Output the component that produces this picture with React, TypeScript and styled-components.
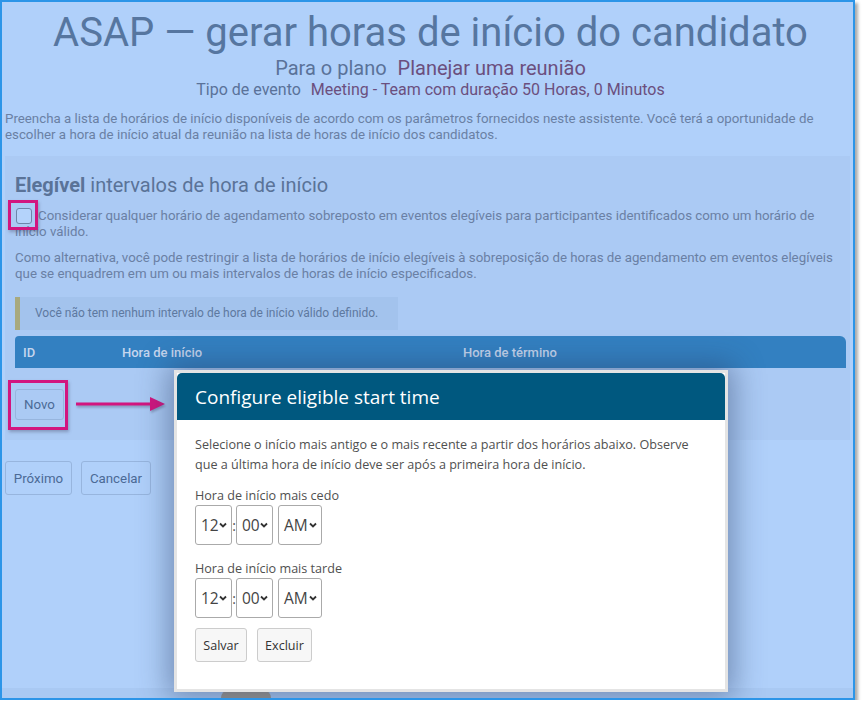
import React from "react";
import styled, { createGlobalStyle } from "styled-components";

const Global = createGlobalStyle`
  html, body { margin: 0; padding: 0; background: #fff; }
  * { box-sizing: border-box; }
`;

const Frame = styled.div`
  position: relative;
  width: 855px;
  height: 700px;
  border: 2px solid #2c95e8;
  background: #b0d0fa;
  box-shadow: 3px 3px 3px rgba(70, 70, 70, 0.45);
  padding: 0 3px;
  overflow: hidden;
  display: flex;
  flex-direction: column;
  font-family: Roboto, "Liberation Sans", sans-serif;
  color: #5a7398;
`;

const Title = styled.h1`
  margin: 0;
  padding: 7px 0 0 6px;
  font-size: 40px;
  font-weight: 400;
  line-height: 48px;
  text-align: center;
  color: #5676a0;
`;

const InfoLine = styled.div<{ $size: number }>`
  padding-left: 6px;
  text-align: center;
  font-size: ${(p) => p.$size}px;
  line-height: ${(p) => p.$size + 3}px;
  color: #5a7299;
  span { color: #6b4f7e; margin-left: 6px; }
`;

const Intro = styled.p`
  margin: 12px 0 0;
  font-size: 13.3px;
  line-height: 16px;
  color: #6a80a4;
`;

const Section = styled.section`
  margin-top: 13px;
  padding: 16px 4px 20px 10px;
  background: #abcaf4;
`;

const SectionTitle = styled.h2`
  margin: 0 0 10px;
  font-size: 20px;
  font-weight: 400;
  line-height: 26px;
  color: #5a7398;
  b { font-weight: 700; }
`;

const Text = styled.p`
  margin: 0;
  font-size: 13.3px;
  line-height: 16px;
  color: #6a80a4;
  & + & { margin-top: 10px; }
`;

const Check = styled.span`
  float: left;
  width: 16px;
  height: 16px;
  margin: 0 6px 0 1px;
  border: 1px solid #6d86ab;
  border-radius: 3px;
  background: #b4d3fb;
`;

const Alert = styled.div`
  width: 383px;
  margin-top: 15px;
  padding: 8px 15px;
  border-left: 5px solid #a8a97e;
  background: #a3c3ed;
  font-size: 12px;
  line-height: 17px;
  color: #5e79a0;
`;

const TableHead = styled.div`
  display: grid;
  grid-template-columns: 99px 341px 1fr;
  height: 32px;
  margin-top: 6px;
  padding-left: 8px;
  align-items: center;
  border-radius: 4px 6px 0 0;
  background: #3380c1;
  font-size: 13px;
  font-weight: 500;
  color: #c6d6ee;
`;

const Button = styled.button<{ $w: number; $h: number }>`
  width: ${(p) => p.$w}px;
  height: ${(p) => p.$h}px;
  padding: 0;
  border: 1px solid #97b5de;
  border-radius: 3px;
  background: transparent;
  font-family: inherit;
  font-size: 13.3px;
  color: #4b6a96;
`;

const NewRow = styled.div`
  margin-top: 21px;
`;

const Footer = styled.div`
  display: flex;
  gap: 9px;
  margin-top: 21px;
`;

const Spacer = styled.div`
  flex: 1;
`;

const BottomBand = styled.div`
  height: 10px;
  margin: 0 -3px;
  background: #a9c9f3;
`;

/* annotation callouts drawn over the page */
const Callout = styled.div<{ $x: number; $y: number; $w: number; $h: number }>`
  position: absolute;
  left: ${(p) => p.$x}px;
  top: ${(p) => p.$y}px;
  width: ${(p) => p.$w}px;
  height: ${(p) => p.$h}px;
  border: 3px solid #d2157f;
  box-shadow: 1px 2px 3px rgba(60, 60, 90, 0.35);
`;

const Arrow = styled.svg`
  position: absolute;
  left: 72px;
  top: 392px;
  filter: drop-shadow(1px 2px 1px rgba(60, 60, 90, 0.35));
`;

const Bump = styled.div`
  position: absolute;
  left: 219px;
  bottom: 0;
  width: 50px;
  height: 8px;
  border-radius: 25px 25px 0 0;
  background: #9d9890;
`;

/* modal dialog */
const Modal = styled.div`
  position: absolute;
  left: 172px;
  top: 368px;
  width: 554px;
  height: 322px;
  border: 3px solid #e4e4e4;
  background: #fff;
  box-shadow: 0 0 28px 6px rgba(40, 60, 100, 0.45);
  font-family: "Open Sans", "Noto Sans", sans-serif;
`;

const ModalHead = styled.div`
  height: 47px;
  padding-left: 18px;
  display: flex;
  align-items: center;
  border-radius: 5px 5px 0 0;
  background: #00587f;
  color: #fff;
  font-size: 19px;
`;

const ModalBody = styled.div`
  padding: 15px 18px 0;
  font-size: 12.6px;
  color: #505050;
`;

const ModalText = styled.p`
  margin: 0;
  line-height: 20px;
`;

const Label = styled.div`
  margin-top: 12px;
  line-height: 18px;
  & ~ & { margin-top: 15px; }
`;

const TimeRow = styled.div`
  display: flex;
  align-items: center;
`;

const Picker = styled.div<{ $w: number }>`
  display: flex;
  align-items: center;
  justify-content: space-between;
  width: ${(p) => p.$w}px;
  height: 40px;
  padding: 0 4px 0 5px;
  border: 1px solid #aaa;
  border-radius: 3px;
  font-size: 15.5px;
  color: #444;
  svg { flex: none; }
`;

const Colon = styled.span`
  width: 4px;
  text-align: center;
  font-size: 14px;
  color: #555;
`;

const Gap = styled.span`
  width: 5px;
`;

const Actions = styled.div`
  display: flex;
  gap: 10px;
  margin-top: 10px;
`;

const ModalButton = styled.button<{ $w: number }>`
  width: ${(p) => p.$w}px;
  height: 34px;
  padding: 0;
  border: 1px solid #ccc;
  border-radius: 3px;
  background: #f7f7f7;
  font-family: inherit;
  font-size: 12.6px;
  color: #333;
`;

function Chevron() {
  return (
    <svg width="8" height="6" viewBox="0 0 8 6">
      <path d="M1 1.5 L4 4.5 L7 1.5" fill="none" stroke="#333" strokeWidth="1.8" />
    </svg>
  );
}

function TimePicker() {
  return (
    <TimeRow>
      <Picker $w={37}>12<Chevron /></Picker>
      <Colon>:</Colon>
      <Picker $w={37}>00<Chevron /></Picker>
      <Gap />
      <Picker $w={44}>AM<Chevron /></Picker>
    </TimeRow>
  );
}

export default function App() {
  return (
    <Frame>
      <Global />
      <Title>ASAP — gerar horas de início do candidato</Title>
      <InfoLine $size={20}>
        Para o plano <span>Planejar uma reunião</span>
      </InfoLine>
      <InfoLine $size={16}>
        Tipo de evento <span>Meeting - Team com duração 50 Horas, 0 Minutos</span>
      </InfoLine>
      <Intro>
        Preencha a lista de horários de início disponíveis de acordo com os parâmetros fornecidos neste assistente. Você terá a oportunidade de escolher a hora de início atual da reunião na lista de horas de início dos candidatos.
      </Intro>

      <Section>
        <SectionTitle>
          <b>Elegível</b> intervalos de hora de início
        </SectionTitle>
        <Text>
          <Check />
          Considerar qualquer horário de agendamento sobreposto em eventos elegíveis para participantes identificados como um horário de início válido.
        </Text>
        <Text>
          Como alternativa, você pode restringir a lista de horários de início elegíveis à sobreposição de horas de agendamento em eventos elegíveis que se enquadrem em um ou mais intervalos de horas de início especificados.
        </Text>
        <Alert>Você não tem nenhum intervalo de hora de início válido definido.</Alert>
        <TableHead>
          <span>ID</span>
          <span>Hora de início</span>
          <span>Hora de término</span>
        </TableHead>
        <NewRow>
          <Button $w={49} $h={31}>Novo</Button>
        </NewRow>
      </Section>

      <Footer>
        <Button $w={67} $h={34}>Próximo</Button>
        <Button $w={70} $h={34}>Cancelar</Button>
      </Footer>
      <Spacer />
      <BottomBand />

      <Callout $x={6} $y={198} $w={30} $h={30} />
      <Callout $x={6} $y={378} $w={60} $h={50} />
      <Arrow width="96" height="20" viewBox="0 0 96 20">
        <line x1="2" y1="10" x2="78" y2="10" stroke="#d2157f" strokeWidth="3" />
        <path d="M76 3 L91 10 L76 17 Z" fill="#d2157f" />
      </Arrow>

      <Bump />
      <Modal>
        <ModalHead>Configure eligible start time</ModalHead>
        <ModalBody>
          <ModalText>
            Selecione o início mais antigo e o mais recente a partir dos horários abaixo. Observe que a última hora de início deve ser após a primeira hora de início.
          </ModalText>
          <Label>Hora de início mais cedo</Label>
          <TimePicker />
          <Label>Hora de início mais tarde</Label>
          <TimePicker />
          <Actions>
            <ModalButton $w={52}>Salvar</ModalButton>
            <ModalButton $w={55}>Excluir</ModalButton>
          </Actions>
        </ModalBody>
      </Modal>
    </Frame>
  );
}
